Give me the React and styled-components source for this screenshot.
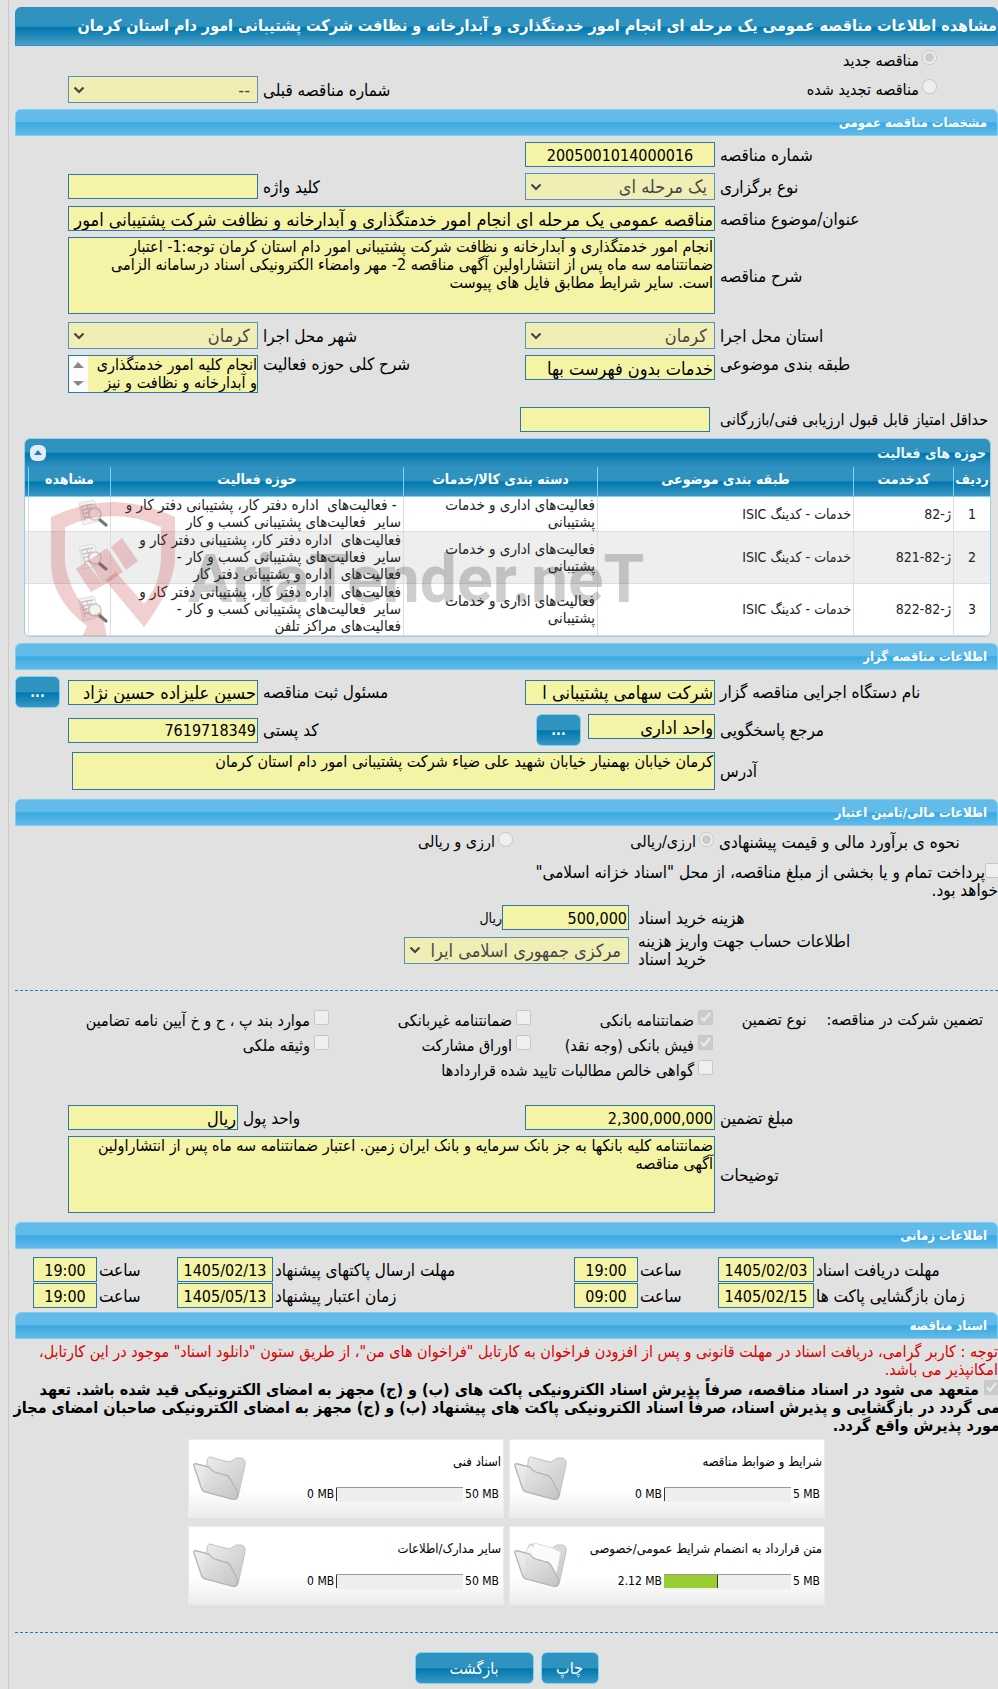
import React from "react";
import styled, { createGlobalStyle } from "styled-components";

const GlobalStyle = createGlobalStyle`
	* {
		box-sizing: border-box;
	}
	body {
		margin: 0;
		background: #e1e1e1;
		color: #000;
		font-family: "DejaVu Sans Condensed", "DejaVu Sans", sans-serif;
		font-size: 16px;
		line-height: 18px;
	}
	input, select, textarea, button {
		font-family: inherit;
		margin: 0;
	}
`;

const Page = styled.main`
	margin-left: 8px;
	padding: 7px 0 5px 6px;
	border-left: 1px solid #c9c9c9;
	overflow: hidden;
`;

const Title = styled.h1`
	margin: 0;
	height: 39px;
	border: 1px solid #2e8ccf;
	border-radius: 6px 6px 0 0;
	background: linear-gradient(#2f92bf 0 48%, #0078ae 54%, #4a9fc6);
	color: #fff;
	font-size: 16px;
	line-height: 35px;
	white-space: nowrap;
`;

const SectionTitle = styled.h2`
	margin: 0;
	height: 27px;
	padding: 0 10px;
	border: 1px solid #78d0f7;
	border-radius: 6px 6px 0 0;
	background: linear-gradient(#63bbea 0 46%, #3ba9e2 52%, #62bbe9);
	color: #fff;
	font-size: 13px;
	line-height: 25px;
`;

const Section = styled.section`
	display: flex;
	flex-direction: column;
	gap: 6px;
	padding: 6px 0 ${(p) => p.$bottom || 6}px;
`;

const FormRow = styled.div`
	display: grid;
	grid-template-columns: minmax(0, 1fr) 190px 267px 190px 53px;
	align-items: center;
	margin-top: ${(p) => p.$space || 0}px;
`;

const Label = styled.label`
	padding-left: 5px;
	font-size: ${(p) => (p.$long ? 16 : 17)}px;
	text-align: left;
`;

const TextInput = styled.input`
	width: ${(p) => p.$width || "100%"};
	height: 25px;
	padding: 1px 1px 0;
	border: 1px solid #2779aa;
	border-radius: 0;
	background: #f5f3a5;
	color: #000;
	font-size: ${(p) => (p.$number ? 16 : 18)}px;
	text-align: ${(p) => p.$align || "right"};
	outline: none;
`;

const Select = styled.select`
	appearance: none;
	width: ${(p) => p.$width || "100%"};
	height: 27px;
	padding: 0 7px 0 20px;
	border: 1px solid #2779aa;
	border-radius: 0;
	background: #f5f3a5
		url("data:image/svg+xml,%3Csvg xmlns='http://www.w3.org/2000/svg' width='12' height='8'%3E%3Cpath d='M1.5 1.5 L6 6 L10.5 1.5' fill='none' stroke='%23111' stroke-width='2.2'/%3E%3C/svg%3E")
		no-repeat 4px center;
	color: #111;
	font-size: 18px;
	opacity: 0.75;
`;

const TextArea = styled.textarea`
	display: block;
	width: 100%;
	height: ${(p) => p.$height}px;
	padding: 0 1px 0 14px;
	border: 1px solid #2779aa;
	background: #f5f3a5;
	color: #000;
	font-size: 16px;
	line-height: 18px;
	resize: none;
	overflow: hidden;
	outline: none;
`;

const Wide = styled.div`
	grid-column: 2 / 5;
	padding-left: ${(p) => p.$inset || 0}px;
`;

const TopRow = styled(FormRow)`
	align-items: start;
`;

const ScoreInput = styled(TextInput)`
	margin-right: 5px;
`;

const ScrollField = styled.div`
	display: flex;
	height: 38px;
	border: 1px solid #2779aa;
	background: #fcfcfc;

	${TextArea} {
		flex: 1;
		min-width: 0;
		border: 0;
		padding: 0;
	}
`;

const ScrollArrows = styled.svg`
	flex: none;
	width: 19px;
	height: 36px;
`;

const Button = styled.button`
	width: ${(p) => p.$width}px;
	height: 32px;
	padding: 0;
	border: 1px solid #77d5f7;
	border-radius: 6px;
	background: linear-gradient(#2f92bf 0 49%, #0078ae 53%, #3a97c3);
	color: #fff;
	font-size: 16px;
	cursor: pointer;
`;

const MoreButton = styled(Button)`
	font-size: 14px;
	font-weight: bold;
`;

const EndCell = styled.div`
	grid-column: 5;
	text-align: left;
	line-height: 0;
`;

const ControlGroup = styled.div`
	display: flex;
	gap: 7px;
`;

const Check = styled.input`
	flex: none;
	width: 15px;
	height: 15px;
`;

const Types = styled.div`
	padding-bottom: 5px;
`;

const TypeRow = styled(FormRow)`
	height: 29px;
`;

const TypeOption = styled.label`
	display: flex;
	align-items: flex-start;
	gap: 3px;
	margin-right: 61px;
	line-height: 21px;
`;

const MoneyMethod = styled.div`
	display: grid;
	grid-template-columns: minmax(0, 1fr) 201px 498px;
	line-height: 20px;
`;

const MoneyOption = styled.label`
	display: flex;
	gap: 3px;
`;

const Treasury = styled.label`
	display: block;
	width: 475px;
	max-width: 100%;
	margin-top: 5px;
	font-size: 17px;

	${Check} {
		margin-right: -2px;
		vertical-align: 0;
	}
`;

const Costs = styled.div`
	display: grid;
	gap: 2px;
`;

const CostRow = styled.div`
	display: grid;
	grid-template-columns: minmax(0, 1fr) 614px;
	align-items: center;
`;

const CostLabel = styled.label`
	justify-self: end;
	max-width: 226px;
	padding-left: 9px;
	font-size: 17px;
	text-align: left;
`;

const CostField = styled.div`
	display: flex;
	align-items: center;
`;

const Unit = styled.span`
	font-size: 14px;
`;

const Divider = styled.hr`
	width: 100%;
	margin: ${(p) => p.$top || 0}px 0 0;
	border: 0;
	border-top: 1px dashed #2779aa;
`;

const Guarantee = styled.div`
	display: flex;
	padding: 13px 15px 0 0;
	margin-bottom: 14px;
`;

const GuaranteeName = styled.div`
	flex: 1;
	min-width: 0;
	display: flex;
	gap: 20px;
	padding-top: 1px;
`;

const GuaranteeTypes = styled.div`
	flex: none;
	width: 698px;
	display: grid;
	grid-template-columns: 182px 202px 1fr;
	grid-auto-rows: 25px;

	label {
		display: flex;
		gap: 4px;
		line-height: 21px;
		white-space: nowrap;
	}
`;

const CurrencyLabel = styled(Label)`
	margin-left: -20px;
	& + ${TextInput} {
		margin-right: 20px;
	}
`;

const TimeGrid = styled.div`
	display: grid;
	grid-template-columns: minmax(0, 1fr) 96px 80px 64px 301px 96px 80px 64px 18px;
	row-gap: 1px;
	align-items: center;
	padding: 8px 0 4px;
`;

const TimeLabel = styled.label`
	grid-column: ${(p) => p.$col};
	padding-left: 2px;
	font-size: 17px;
	text-align: left;
`;

/* activity table */

const Panel = styled.div`
	position: relative;
	margin: 0 7px 0 9px;
	border: 1px solid #9fcbe4;
	border-radius: 6px;
	background: #fff;
	overflow: hidden;
`;

const PanelHead = styled.div`
	display: flex;
	align-items: center;
	justify-content: space-between;
	height: 28px;
	padding: 0 4px 0 5px;
	border-bottom: 1px solid #2e8ccf;
	background: linear-gradient(#2f92bf 0 48%, #0078ae 54%, #2f8fbe);
	color: #eaf5f7;
	font-size: 14px;
	font-weight: bold;
`;

const Collapse = styled.button`
	width: 16px;
	height: 16px;
	padding: 0;
	border: 0;
	border-radius: 6px;
	background: #e4ebf7;
	line-height: 0;
`;

const Grid = styled.table`
	width: 100%;
	table-layout: fixed;
	border-collapse: separate;
	border-spacing: 0;
	font-size: 15px;
	line-height: 17px;

	th {
		height: 30px;
		padding: 0 0 4px;
		background: linear-gradient(#2f92bf 0 46%, #0078ae 52%, #3a97c3);
		border-left: 1px solid #77d5f7;
		border-bottom: 1px solid #77d5f7;
		color: #fff;
		font-size: 14px;
	}
	td {
		padding: 0 2px;
		border-left: 1px solid #ddd;
		border-bottom: 1px solid #ddd;
		color: #222;
		white-space: pre-wrap;
	}
	tr:nth-child(even) td {
		background: #eee;
	}
	td:first-child {
		text-align: center;
	}
	th:last-child,
	td:last-child {
		border-left: 0;
	}
`;

const Code = styled.td`
	font-size: 14px;
`;

const ViewCell = styled.td`
	text-align: right;
	line-height: 0;
`;

const Watermark = styled.div`
	position: absolute;
	left: 25px;
	top: 62px;
	display: flex;
	align-items: flex-start;
	gap: 12px;
	pointer-events: none;
`;

const WatermarkText = styled.span`
	padding-top: 46px;
	color: rgba(60, 60, 60, 0.25);
	font-family: Roboto, sans-serif;
	font-size: 66px;
	font-weight: bold;
	line-height: 66px;
`;

/* documents */

const Notice = styled.p`
	margin: 0;
	padding: 4px 0 1px;
	color: #d80000;
`;

const Commitment = styled.label`
	display: block;
	margin: 0 -2px;
	font-weight: bold;

	${Check} {
		margin: 0 1px 0 5px;
	}
`;

const Cards = styled.div`
	display: grid;
	grid-template-columns: 316px 316px;
	justify-content: center;
	gap: 8px 5px;
	padding: 4px 0 27px;
`;

const Card = styled.article`
	display: flex;
	justify-content: space-between;
	align-items: center;
	height: 79px;
	padding: 0 2px 0 3px;
	border: 1px solid #eaeaea;
	background: linear-gradient(#fff 65%, #ececec);
`;

const CardBody = styled.div`
	display: flex;
	flex-direction: column;
	gap: 16px;
	padding-bottom: 2px;
	font-size: 13px;
`;

const Usage = styled.div`
	display: flex;
	align-items: center;
	gap: 2px;
	padding-right: 2px;
	font-size: 12px;
	line-height: 15px;

	span {
		direction: ltr;
	}
`;

const Track = styled.div`
	width: 127px;
	height: 15px;
	direction: ltr;
	border-top: 1px solid #999;
	background: #eee;
`;

const Fill = styled.div`
	height: 13px;
	border-right: 1px solid #333;
	background: #9acc33;
`;

const Actions = styled.div`
	display: flex;
	justify-content: center;
	gap: 7px;
	padding-top: 19px;
`;

const ROWS = [
	{
		code: "ژ-82",
		activity: " - فعالیت‌های  اداره دفتر کار، پشتیبانی دفتر کار و\nسایر  فعالیت‌های پشتیبانی کسب و کار",
	},
	{
		code: "ژ-82-821",
		activity:
			"فعالیت‌های  اداره دفتر کار، پشتیبانی دفتر کار و\nسایر  فعالیت‌های پشتیبانی کسب و کار -\nفعالیت‌های  اداره و پشتیبانی دفتر کار",
	},
	{
		code: "ژ-82-822",
		activity:
			"فعالیت‌های  اداره دفتر کار، پشتیبانی دفتر کار و\nسایر  فعالیت‌های پشتیبانی کسب و کار -\nفعالیت‌های مراکز تلفن",
	},
];

const GUARANTEES = [
	["ضمانتنامه بانکی", true],
	["ضمانتنامه غیربانکی", false],
	["موارد بند پ ، ح و خ آیین نامه تضامین", false],
	["فیش بانکی (وجه نقد)", true],
	["اوراق مشارکت", false],
	["وثیقه ملکی", false],
	["گواهی خالص مطالبات تایید شده قراردادها", false],
];

const TIMES = [
	["مهلت دریافت اسناد", "1405/02/03", "19:00"],
	["مهلت ارسال پاکتهای پیشنهاد", "1405/02/13", "19:00"],
	["زمان بازگشایی پاکت ها", "1405/02/15", "09:00"],
	["زمان اعتبار پیشنهاد", "1405/05/13", "19:00"],
];

const DOCS = [
	{ title: "شرایط و ضوابط مناقصه", max: 5, used: 0 },
	{ title: "اسناد فنی", max: 50, used: 0 },
	{ title: "متن قرارداد به انضمام شرایط عمومی/خصوصی", max: 5, used: 2.12 },
	{ title: "سایر مدارک/اطلاعات", max: 50, used: 0 },
];

const ViewIcon = () => (
	<svg width="30" height="30" viewBox="0 0 30 30">
		<path d="M1 4 L15 1 L17 3 L21 22 L5 26 L4 21 Z" fill="#f3f3f3" stroke="#ddd" strokeWidth="1" />
		<g stroke="#c4c4c4" strokeWidth="1.4">
			<path d="M4 7 L15 5 M5 11 L14 9 M5 15 L12 13 M6 19 L13 17" />
			<path d="M3 6 L7 22 M9 5 L12 20" strokeWidth="1" />
		</g>
		<circle cx="17" cy="15" r="6" fill="rgba(245,245,245,.8)" stroke="#c8c8c8" strokeWidth="1.5" />
		<path d="M22 21 L28 26" stroke="#777" strokeWidth="3.2" strokeLinecap="round" />
	</svg>
);

const ShieldIcon = () => (
	<svg width="126" height="138" viewBox="0 0 126 138" fill="rgba(200,60,65,.25)">
		<path d="M1 16 Q31 2 63 1 Q95 2 125 16 V55 Q125 85 94 126 L55 79 L66 71 L94 103 Q111 82 111 55 V26 Q87 15 63 15 Q39 15 15 26 V62 Q20 94 42 114 L52 111 L57 137 L32 136 L37 125 Q1 98 1 62 Z" />
		<path d="M61 46 L72 37 L88 60 L76 69 Z" />
		<path d="M38 60 L57 47 L73 71 L54 84 Z" />
		<path d="M26 68 L36 61 L54 84 L41 91 Z" />
	</svg>
);

const FolderIcon = ({ full }) => (
	<svg width="56" height="50" viewBox="0 0 56 50">
		<defs>
			<linearGradient id="folder" x1="0" y1="0" x2="1" y2="1">
				<stop offset="0" stopColor="#ededed" />
				<stop offset="1" stopColor="#c4c4c4" />
			</linearGradient>
		</defs>
		<path
			d="M15 9 Q15 3 18 3 L33 7 L38 8 L44 4 L50 4 Q54 6 53 11 L46 43 Q45 46 41 45 L12 37 Z"
			fill="url(#folder)"
			stroke="#c2c2c2"
		/>
		{full && (
			<path d="M12 12 L17 4 L20 6 L21 2 L40 7 L48 11 L43 34 L38 26 L14 17 Z" fill="#fafafa" stroke="#ddd" />
		)}
		<path
			d="M2 12 Q1 9 5 10 L17 13 Q20 18 26 19 L33 21 Q36 21 39 26 L46 39 L45 44 Q43 46 40 45 L13 38 Q10 37 9 33 Z"
			fill="url(#folder)"
			fillOpacity=".85"
			stroke="#b4b4b4"
			strokeWidth="1.3"
		/>
	</svg>
);

const App = () => (
	<>
		<GlobalStyle />
		<Page dir="rtl">
			<Title>
				مشاهده اطلاعات مناقصه عمومی یک مرحله ای انجام امور خدمتگذاری و آبدارخانه و نظافت شرکت پشتیبانی
				امور دام استان کرمان
			</Title>
			<Types>
				<TypeRow>
					<TypeOption>
						<Check type="radio" name="kind" defaultChecked disabled />
						مناقصه جدید
					</TypeOption>
				</TypeRow>
				<TypeRow>
					<TypeOption>
						<Check type="radio" name="kind" disabled />
						مناقصه تجدید شده
					</TypeOption>
					<span />
					<Label htmlFor="prev">شماره مناقصه قبلی</Label>
					<Select id="prev" disabled>
						<option>--</option>
					</Select>
				</TypeRow>
			</Types>

			<SectionTitle>مشخصات مناقصه عمومی</SectionTitle>
			<Section>
				<FormRow>
					<Label htmlFor="number">شماره مناقصه</Label>
					<TextInput id="number" $number $align="center" readOnly defaultValue="2005001014000016" />
				</FormRow>
				<FormRow>
					<Label htmlFor="type">نوع برگزاری</Label>
					<Select id="type" disabled>
						<option>یک مرحله ای</option>
					</Select>
					<Label htmlFor="keyword">کلید واژه</Label>
					<TextInput id="keyword" readOnly />
				</FormRow>
				<FormRow>
					<Label htmlFor="subject">عنوان/موضوع مناقصه</Label>
					<Wide>
						<TextInput
							id="subject"
							readOnly
							defaultValue="مناقصه عمومی یک مرحله ای انجام امور خدمتگذاری و آبدارخانه و نظافت شرکت پشتیبانی امور"
						/>
					</Wide>
				</FormRow>
				<FormRow>
					<Label htmlFor="desc">شرح مناقصه</Label>
					<Wide>
						<TextArea
							id="desc"
							$height={77}
							readOnly
							defaultValue="انجام امور خدمتگذاری و آبدارخانه و نظافت شرکت پشتیبانی امور دام استان کرمان توجه:1- اعتبار ضمانتنامه سه ماه پس از انتشاراولین آگهی مناقصه 2- مهر وامضاء الکترونیکی اسناد درسامانه الزامی است. سایر شرایط مطابق فایل های پیوست"
						/>
					</Wide>
				</FormRow>
				<FormRow $space={2}>
					<Label htmlFor="province">استان محل اجرا</Label>
					<Select id="province" disabled>
						<option>کرمان</option>
					</Select>
					<Label htmlFor="city">شهر محل اجرا</Label>
					<Select id="city" disabled>
						<option>کرمان</option>
					</Select>
				</FormRow>
				<TopRow>
					<Label htmlFor="class">طبقه بندی موضوعی</Label>
					<TextInput id="class" readOnly defaultValue="خدمات بدون فهرست بها" />
					<Label htmlFor="scope">شرح کلی حوزه فعالیت</Label>
					<ScrollField>
						<TextArea
							id="scope"
							$height={36}
							readOnly
							defaultValue={"انجام کلیه امور خدمتگذاری\nو آبدارخانه و نظافت و نیز"}
						/>
						<ScrollArrows viewBox="0 0 19 36" fill="#888">
							<path d="M4 12 L9 6 L15 12 Z M4 25 L9 30 L15 25 Z" />
						</ScrollArrows>
					</ScrollField>
				</TopRow>
				<FormRow $space={8}>
					<Label $long htmlFor="score">
						حداقل امتیاز قابل قبول ارزیابی فنی/بازرگانی
					</Label>
					<ScoreInput id="score" readOnly />
				</FormRow>

				<Panel>
					<PanelHead>
						حوزه های فعالیت
						<Collapse aria-label="بستن">
							<svg width="10" height="10" viewBox="0 0 10 10" fill="#1b7fb2">
								<path d="M1 7 L5 2 L9 7 Z" />
							</svg>
						</Collapse>
					</PanelHead>
					<Grid>
						<colgroup>
							<col width="37" />
							<col width="100" />
							<col />
							<col width="194" />
							<col width="293" />
							<col width="82" />
							<col width="3" />
						</colgroup>
						<thead>
							<tr>
								<th>ردیف</th>
								<th>کدخدمت</th>
								<th>طبقه بندی موضوعی</th>
								<th>دسته بندی کالا/خدمات</th>
								<th>حوزه فعالیت</th>
								<th>مشاهده</th>
								<th />
							</tr>
						</thead>
						<tbody>
							{ROWS.map((row, index) => (
								<tr key={row.code}>
									<Code>{index + 1}</Code>
									<Code>{row.code}</Code>
									<Code>خدمات - کدینگ ISIC</Code>
									<td>{"فعالیت‌های اداری و خدمات\nپشتیبانی"}</td>
									<td>{row.activity}</td>
									<ViewCell>
										<ViewIcon />
									</ViewCell>
									<td />
								</tr>
							))}
						</tbody>
					</Grid>
					<Watermark dir="ltr">
						<ShieldIcon />
						<WatermarkText>AriaTender.neT</WatermarkText>
					</Watermark>
				</Panel>
			</Section>

			<SectionTitle>اطلاعات مناقصه گزار</SectionTitle>
			<Section $bottom={9}>
				<FormRow>
					<Label htmlFor="org">نام دستگاه اجرایی مناقصه گزار</Label>
					<TextInput id="org" readOnly defaultValue="شرکت سهامی پشتیبانی ا" />
					<Label htmlFor="officer">مسئول ثبت مناقصه</Label>
					<TextInput id="officer" readOnly defaultValue="حسین علیزاده حسین نژاد" />
					<EndCell>
						<MoreButton $width={45}>...</MoreButton>
					</EndCell>
				</FormRow>
				<FormRow>
					<Label htmlFor="contact">مرجع پاسخگویی</Label>
					<ControlGroup>
						<TextInput id="contact" $width="127px" readOnly defaultValue="واحد اداری" />
						<MoreButton $width={45}>...</MoreButton>
					</ControlGroup>
					<Label htmlFor="postal">کد پستی</Label>
					<TextInput id="postal" $number readOnly defaultValue="7619718349" />
				</FormRow>
				<FormRow>
					<Label htmlFor="address">آدرس</Label>
					<Wide $inset={4}>
						<TextArea
							id="address"
							$height={38}
							readOnly
							defaultValue="کرمان خیابان بهمنیار خیابان شهید علی ضیاء شرکت پشتیبانی امور دام استان کرمان"
						/>
					</Wide>
				</FormRow>
			</Section>

			<SectionTitle>اطلاعات مالی/تامین اعتبار</SectionTitle>
			<Section $bottom={9}>
				<MoneyMethod>
					<Label as="span">نحوه ی برآورد مالی و قیمت پیشنهادی</Label>
					<MoneyOption>
						<Check type="radio" name="money" defaultChecked disabled />
						ارزی/ریالی
					</MoneyOption>
					<MoneyOption>
						<Check type="radio" name="money" disabled />
						ارزی و ریالی
					</MoneyOption>
				</MoneyMethod>
				<Treasury>
					<Check type="checkbox" disabled />
					پرداخت تمام و یا بخشی از مبلغ مناقصه، از محل "اسناد خزانه اسلامی" خواهد بود.
				</Treasury>
				<Costs>
					<CostRow>
						<CostLabel htmlFor="cost">هزینه خرید اسناد</CostLabel>
						<CostField>
							<TextInput id="cost" $number $width="127px" readOnly defaultValue="500,000" />
							<Unit>ریال</Unit>
						</CostField>
					</CostRow>
					<CostRow>
						<CostLabel htmlFor="account">اطلاعات حساب جهت واریز هزینه خرید اسناد</CostLabel>
						<Select id="account" $width="225px" disabled>
							<option>مرکزی جمهوری اسلامی ایرا</option>
						</Select>
					</CostRow>
				</Costs>
				<Divider $top={16} />
				<Guarantee>
					<GuaranteeName>
						<span>تضمین شرکت در مناقصه:</span>
						<span>نوع تضمین</span>
					</GuaranteeName>
					<GuaranteeTypes>
						{GUARANTEES.map(([name, checked]) => (
							<label key={name}>
								<Check type="checkbox" defaultChecked={checked} disabled />
								{name}
							</label>
						))}
					</GuaranteeTypes>
				</Guarantee>
				<FormRow>
					<Label htmlFor="amount">مبلغ تضمین</Label>
					<TextInput id="amount" $number readOnly defaultValue="2,300,000,000" />
					<CurrencyLabel htmlFor="currency">واحد پول</CurrencyLabel>
					<TextInput id="currency" $width="170px" readOnly defaultValue="ریال" />
				</FormRow>
				<FormRow>
					<Label htmlFor="notes">توضیحات</Label>
					<Wide>
						<TextArea
							id="notes"
							$height={77}
							readOnly
							defaultValue="ضمانتنامه کلیه بانکها به جز بانک سرمایه و بانک ایران زمین. اعتبار ضمانتنامه سه ماه پس از انتشاراولین آگهی مناقصه"
						/>
					</Wide>
				</FormRow>
			</Section>

			<SectionTitle>اطلاعات زمانی</SectionTitle>
			<TimeGrid>
				{TIMES.map(([name, date, time], index) => (
					<React.Fragment key={name}>
						<TimeLabel $col={index % 2 ? 5 : 1} htmlFor={`date${index}`}>
							{name}
						</TimeLabel>
						<TextInput id={`date${index}`} $number $align="center" readOnly defaultValue={date} />
						<TimeLabel htmlFor={`time${index}`}>ساعت</TimeLabel>
						<TextInput id={`time${index}`} $number $align="center" readOnly defaultValue={time} />
					</React.Fragment>
				))}
			</TimeGrid>

			<SectionTitle>اسناد مناقصه</SectionTitle>
			<Notice>
				توجه : کاربر گرامی، دریافت اسناد در مهلت قانونی و پس از افزودن فراخوان به کارتابل "فراخوان های من"، از
				طریق ستون "دانلود اسناد" موجود در این کارتابل، امکانپذیر می باشد.
			</Notice>
			<Commitment>
				<Check type="checkbox" defaultChecked disabled />
				متعهد می شود در اسناد مناقصه، صرفاً پذیرش اسناد الکترونیکی پاکت های (ب) و (ج) مجهز به امضای الکترونیکی
				قید شده باشد. تعهد می گردد در بازگشایی و پذیرش اسناد، صرفاً اسناد الکترونیکی پاکت های پیشنهاد (ب) و (ج)
				مجهز به امضای الکترونیکی صاحبان امضای مجاز مورد پذیرش واقع گردد.
			</Commitment>
			<Cards>
				{DOCS.map((doc) => (
					<Card key={doc.title}>
						<CardBody>
							<span>{doc.title}</span>
							<Usage>
								<span>{doc.max} MB</span>
								<Track>
									<Fill style={{ width: `${(doc.used / doc.max) * 100}%` }} />
								</Track>
								<span>{doc.used} MB</span>
							</Usage>
						</CardBody>
						<FolderIcon full={doc.used > 0} />
					</Card>
				))}
			</Cards>
			<Divider />
			<Actions>
				<Button $width={58}>چاپ</Button>
				<Button $width={119}>بازگشت</Button>
			</Actions>
		</Page>
	</>
);

export default App;
